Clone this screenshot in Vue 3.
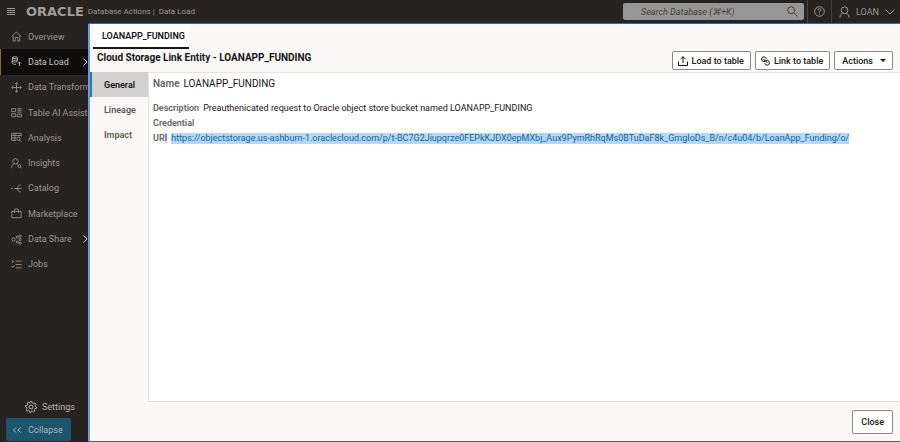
<script setup>
const nav = [
  { label: 'Overview', icon: 'M1 6.5 6.5 1 12 6.5M2.5 5.5V12H5V7.5H8V12H10.500V5.500' },
  { label: 'Data Load', active: true, more: true, icon: 'M1.500 2C1.500.6 7.500.6 7.500 2S1.500 3.400 1.500 2V8.500C1.500 9.500 3.500 10 6 9.800M1.500 4.200C2 5.500 7 5.500 7.500 4.200V2M1.500 6.400C2.500 7.500 5.500 7.500 7.500 6.400V4M10 12V7M8 9 10 7 12 9' },
  { label: 'Data Transform', icon: 'M6.500.8V12.200M.8 6.500H12.200M4.800 2.500 6.500.8 8.200 2.500M4.800 10.500 6.500 12.200 8.200 10.500M2.500 4.800.8 6.500 2.500 8.200M10.500 4.800 12.200 6.500 10.500 8.200' },
  { label: 'Table AI Assist', icon: 'M.8 2H5.500V5.500H.8ZM.8 8H5.500V11.500H.8ZM7.500 2H12.500M7.500 4H12.500M7.500 6H12.500M7.500 8.500H12.500V11.500H7.500Z' },
  { label: 'Analysis', icon: 'M12 5V1.500H.8V10H6M.8 4H12M.8 7H6M4.500 1.500V10M8.500 4V5M10.800 8A2 2 0 1 1 6.800 8A2 2 0 1 1 10.800 8M10.200 9.500 12.500 12' },
  { label: 'Insights', icon: 'M8.500 4A3.200 3.200 0 1 1 2.100 4A3.200 3.200 0 1 1 8.500 4M.8 12C.8 9 2 7.500 3.800 6.800M6.800 6.800 8 8M11.500 9.500A1.600 1.600 0 1 1 8.300 9.500A1.600 1.600 0 1 1 11.500 9.500M11 10.700 12.500 12.300' },
  { label: 'Catalog', icon: 'M0 6.500H2M3.500 6.500H12.500M11.500 2.500H10L6.500 6.500 10 10.500H11.500' },
  { label: 'Marketplace', icon: 'M1 4H12V11.500H1ZM4 6V2.500Q4 1 6.500 1T9 2.500V6' },
  { label: 'Data Share', more: true, icon: 'M5 6.500A2 2 0 1 1 1 6.500A2 2 0 1 1 5 6.500M6.200 3.500A1.300 1.300 0 1 0 8.800 3.500A1.300 1.300 0 1 0 6.200 3.500M6.200 9.500A1.300 1.300 0 1 0 8.800 9.500A1.300 1.300 0 1 0 6.200 9.500M9.500 2.500A1.300 1.300 0 1 0 12.100 2.500A1.300 1.300 0 1 0 9.500 2.500M9.500 6.500A1.300 1.300 0 1 0 12.100 6.500A1.300 1.300 0 1 0 9.500 6.500M9.500 10.800A1.300 1.300 0 1 0 12.100 10.800A1.300 1.300 0 1 0 9.500 10.800' },
  { label: 'Jobs', icon: 'M1 1.500 3 3 1 4.500M.5 8 2 10 4 7.500M5.500 2.500H12.500M5.500 6.500H12.500M5.500 10.500H12.500' }
]
const tabs = ['General', 'Lineage', 'Impact']
const uri = 'https://objectstorage.us-ashburn-1.oraclecloud.com/p/t-BC7G2Jiupqrze0FEPkKJDX0epMXbj_Aux9PymRhRqMs0BTuDaF8k_GmgIoDs_B/n/c4u04/b/LoanApp_Funding/o/'
</script>

<template>
  <div class="page">
    <header class="topbar">
      <button class="icon-button menu" aria-label="Menu">
        <svg width="8" height="8" viewBox="0 0 8 8"><path d="M0 .5H8M0 2.500H8M0 4.500H8M0 6.500H8" /></svg>
      </button>
      <a class="brand" href="#">ORACLE</a>
      <span class="crumb">Database Actions |</span>
      <span class="crumb section">Data Load</span>
      <label class="search">
        <input type="text" placeholder="Search Database (⌘+K)" aria-label="Search Database" />
        <svg width="11" height="11" viewBox="0 0 11 11"><circle cx="4.200" cy="4.200" r="3.500" /><path d="M6.800 6.800 10.500 10.500" /></svg>
      </label>
      <button class="icon-button help" aria-label="Help">
        <svg width="11" height="11" viewBox="0 0 11 11"><circle cx="5.500" cy="5.500" r="4.800" /><path d="M4 4.300Q4 2.800 5.500 2.800T7 4.200Q7 5 5.500 5.700V6.500M5.500 7.500V8.500" /></svg>
      </button>
      <button class="user">
        <svg width="11" height="12" viewBox="0 0 11 12"><circle cx="5.500" cy="4.300" r="3.400" /><path d="M1 11.500C1 9 2 7.800 3.800 7.300M7.200 7.300C9 7.800 10 9 10 11.500" /></svg>
        <span>LOAN</span>
        <svg width="10" height="6" viewBox="0 0 10 6"><path d="M.5.500 5 5 9.500.5" /></svg>
      </button>
    </header>

    <div class="body">
      <aside class="sidebar">
        <nav class="nav">
          <a v-for="item in nav" :key="item.label" href="#" class="nav-item" :class="{ active: item.active }">
            <svg width="11" height="11" viewBox="0 0 13 13"><path :d="item.icon" /></svg>
            <span class="nav-label">{{ item.label }}</span>
            <svg v-if="item.more" class="more" width="5" height="8" viewBox="0 0 5 8"><path d="M.5.500 4 4 .5 7.500" /></svg>
          </a>
        </nav>
        <a class="settings" href="#">
          <svg width="12" height="12" viewBox="0 0 12 12"><path d="M5 .7H7L7.400 2.200 8.600 2.700 9.900 1.900 11 3.400 10 4.800 10.200 5.300 11.400 6V7.400L9.900 7.600 9.300 8.600 9.900 10 8.600 11 7.300 10.100 6.600 10.200 6 11.400H4.900L4.500 10 3.500 9.500 2.100 10 1.100 8.600 2 7.400 1.900 6.700.6 6V4.700L2.100 4.400 2.600 3.500 2.100 2.100 3.500 1.200 4.500 2.100Z" /><circle cx="6" cy="6" r="2" /></svg>
          <span>Settings</span>
        </a>
        <button class="collapse">
          <svg width="8" height="6" viewBox="0 0 8 6"><path d="M3 .5.500 3 3 5.500M7.500.5 5 3 7.500 5.500" /></svg>
          <span>Collapse</span>
        </button>
      </aside>

      <main class="dialog">
        <div class="entity-tabs"><button class="entity-tab">LOANAPP_FUNDING</button></div>
        <div class="title-row">
          <h1>Cloud Storage Link Entity - LOANAPP_FUNDING</h1>
          <div class="actions">
            <button class="btn">
              <svg width="10" height="10" viewBox="0 0 10 10"><path d="M.5 5.500V9.500H9.500V5.500M5 7V.7M2.500 3.200 5 .7 7.500 3.200" /></svg>
              Load to table
            </button>
            <button class="btn">
              <svg width="9" height="10" viewBox="0 0 9 10"><path d="M4 5.500H2.500Q.5 5 .6 3T2.700.8Q4.800.8 5.200 2.800M2.700 3Q3 5 5 5.200M5 4.300H6.500Q8.500 5 8.400 7T6.300 9.200Q4.200 9.200 3.800 7.200M6.300 7Q6 5 4 4.800" /></svg>
              Link to table
            </button>
            <button class="btn menu-btn">Actions <i class="caret"></i></button>
          </div>
        </div>
        <div class="workspace">
          <div class="side-tabs">
            <button v-for="(tab, i) in tabs" :key="tab" class="side-tab" :class="{ selected: i === 0 }">{{ tab }}</button>
          </div>
          <section class="details">
            <p class="name"><b>Name</b><span>LOANAPP_FUNDING</span></p>
            <p class="field"><b>Description</b><span>Preauthenicated request to Oracle object store bucket named LOANAPP_FUNDING</span></p>
            <p class="field"><b>Credential</b></p>
            <p class="field uri"><b>UR<mark>I</mark></b><a :href="uri">{{ uri }}</a></p>
          </section>
        </div>
        <footer class="footer"><button class="btn close">Close</button></footer>
      </main>
    </div>
  </div>
</template>

<style>
body { background: #272320; }
</style>

<style scoped>
* { box-sizing: border-box; }
.page {
  display: flex;
  flex-direction: column;
  min-height: 100vh;
  background: #272320;
  color: #161513;
  font: 9px/12px Roboto, "Noto Sans", sans-serif;
}
button, input { font: inherit; color: inherit; margin: 0; padding: 0; border: 0; background: none; }
a { color: inherit; text-decoration: none; }
svg { flex: none; fill: none; stroke: currentColor; stroke-width: 1; }

.topbar { display: flex; align-items: center; height: 23px; color: #9a9794; }
.icon-button { display: flex; align-items: center; justify-content: center; }
.menu { margin-left: 7px; width: 8px; }
.brand { margin-left: 11px; font: bold 13px/14px "DejaVu Sans", sans-serif; color: #a09d9a; }
.crumb { margin-left: 4px; font-size: 8px; white-space: nowrap; }
.search {
  display: flex;
  align-items: center;
  width: 181px;
  height: 17px;
  margin-left: auto;
  padding: 0 6px 0 18px;
  border-radius: 2px;
  background: #969696;
  color: #45423f;
}
.search input { flex: 1; min-width: 0; font-style: italic; outline: 0; }
.search input::placeholder { color: #45423f; opacity: 1; }
.help { align-self: stretch; width: 25px; margin-left: 3px; border: solid #45413e; border-width: 0 1px; }
.user { display: flex; align-items: center; gap: 6px; padding: 0 5px 0 7px; }

.body { display: flex; flex: 1; }
.sidebar { display: flex; flex-direction: column; flex: none; width: 88px; padding-top: 1px; color: #9a9794; }
.nav { display: grid; grid-template-columns: minmax(0, 1fr); grid-auto-rows: 1fr; height: 253px; }
.nav-item { position: relative; display: flex; align-items: center; gap: 6px; padding-left: 11px; white-space: nowrap; }
.nav-item.active { padding-left: 10px; border-left: 1px solid #8b6d2c; background: #0f0d0c; color: #c6c3c0; }
.more { position: absolute; right: 0; color: #d0cdca; }
.settings { display: flex; align-items: center; gap: 5px; margin: auto 0 5px 25px; color: #b6b3b0; }
.collapse { display: flex; align-items: center; gap: 7px; width: 65px; height: 23px; margin: 0 0 1px 6px; padding-left: 7px; border-radius: 2px; background: #1b566d; color: #a9b8be; }

.dialog {
  display: flex;
  flex: 1;
  flex-direction: column;
  min-width: 0;
  border: solid #2c68bd;
  border-width: 1px 0 1px 2px;
  border-left-color: #7099ee;
  border-top-left-radius: 2px;
  background: #fbf9f8;
}
.entity-tabs { padding-left: 3px; }
.entity-tab { height: 25px; padding: 0 4px 0 9px; border-bottom: 2px solid #161513; background: #fff; font-weight: 600; }
.title-row { display: flex; justify-content: space-between; padding: 2px 7px 2px; }
.title-row h1 { margin: 0; font-size: 10px; line-height: 14px; font-weight: 700; white-space: nowrap; }
.actions { display: flex; gap: 4px; }
.btn {
  display: flex;
  align-items: center;
  justify-content: center;
  gap: 4px;
  height: 19px;
  padding: 0 6px 0 5px;
  border: 1px solid #8b8886;
  border-radius: 2px;
  background: #fff;
  font-weight: 500;
  white-space: nowrap;
}
.menu-btn { gap: 7px; padding: 0 6px 0 7px; }
.caret { border: solid transparent; border-width: 3px 3px 0; border-top-color: #161513; }
.workspace { display: flex; flex: 1; }
.side-tabs { flex: none; width: 58px; }
.side-tab { display: block; width: 100%; height: 25px; padding-left: 12px; border-left: 2px solid transparent; color: #5c5956; font-weight: 600; text-align: left; }
.side-tab.selected { border-color: #227e9e; background: #d4d2d0; color: #161513; }
.details { flex: 1; min-width: 0; padding: 4px 4px 12px; border: solid #e7e5e3; border-width: 1px 0 1px 1px; border-radius: 2px 0 0 2px; background: #fff; }
.details p { display: flex; gap: 4px; margin: 0; }
.details b { color: #65625f; font-weight: 600; }
.details .name { margin-bottom: 10px; font-size: 10px; line-height: 14px; }
.field { line-height: 15px; white-space: nowrap; }
.uri a, .uri mark { background: #b3d7fe; }
.uri a { align-self: center; color: #10698b; line-height: 11px; }
.uri mark { color: inherit; }
.footer { display: flex; justify-content: flex-end; padding: 8px 7px 7px; }
.close { height: 24px; padding: 0 8px; }
</style>
